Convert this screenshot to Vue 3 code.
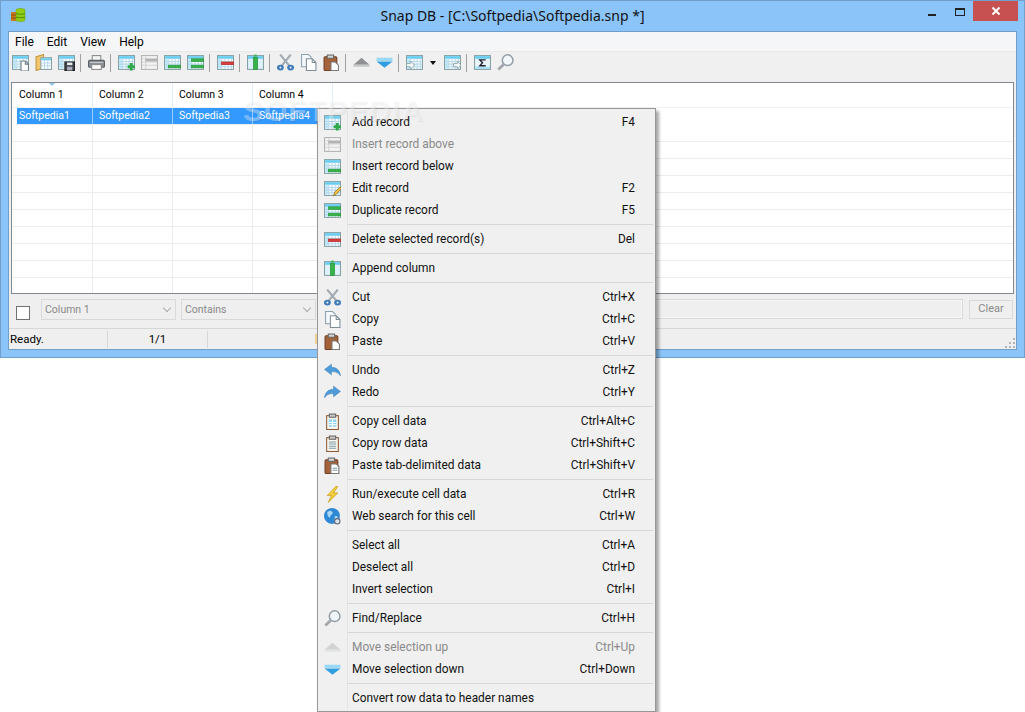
<script setup>
const tbl = (body = '') => `<rect x=".5" y="1.5" width="15" height="13" fill="#fff" stroke="#86a0a4"/><rect x="1" y="2" width="14" height="2.500" fill="#69cdf2"/><rect x="1" y="4.500" width="3" height="9.500" fill="#c2ebfb"/><path d="M1 7h14M1 9.500h14M1 12h14M4.500 4.500v9.500M7.500 4.500v9.500M10.500 4.500v9.500M13.500 4.500v9.500" stroke="#b5d8ec" fill="none"/>${body}`
const page = `<path d="M8.500 6.500h4l3 3v6.500h-7z" fill="#fff" stroke="#6f7f88"/><path d="M12.500 6.500v3h3" fill="none" stroke="#6f7f88"/>`
const bar = (y, c = '#37b34a', e = '#1f8f33') => `<rect x="4" y="${y}" width="12" height="2.600" fill="${c}" stroke="${e}" stroke-width=".5"/>`
const tri = (up, a, b) => up
  ? `<path d="M8 3.500L15.500 10H.5z" fill="${a}"/><rect x=".5" y="10" width="15" height="2" fill="${b}"/>`
  : `<path d="M.5 7h15L8 13z" fill="${a}"/><rect x=".5" y="3.500" width="15" height="3" fill="${b}"/>`
const scissors = `<path d="M3 .5l8.500 10.500M13 .5L4.500 11" stroke="#a2abb2" stroke-width="2" fill="none"/><ellipse cx="3.200" cy="12.800" rx="3.200" ry="2.700" fill="#3f79b8"/><ellipse cx="12.800" cy="12.800" rx="3.200" ry="2.700" fill="#3f79b8"/><circle cx="3.200" cy="12.800" r="1" fill="#dfeaf4"/><circle cx="12.800" cy="12.800" r="1" fill="#dfeaf4"/>`
const clip = `<rect x="1" y="2.500" width="12" height="13" rx="1" fill="#a4623a" stroke="#6f3f22"/><rect x="4" y="1" width="6" height="3" fill="#d8d8d8" stroke="#666"/>`
const icons = {
  new: tbl(page),
  open: `<path d="M1 2.500l7-2v13l-7 2z" fill="#f2c66d" stroke="#c2953f"/><rect x="5.500" y="3.500" width="10" height="11" fill="#fff" stroke="#86a0a4"/><rect x="6" y="4" width="9" height="2" fill="#69cdf2"/><path d="M6 8.500h9M6 11h9M9 6v8M12 6v8" stroke="#b5d8ec"/>`,
  save: tbl(`<rect x="6.500" y="7.500" width="9" height="8" fill="#3b4650" stroke="#222"/><rect x="8.500" y="8" width="5" height="2.500" fill="#e8e8e8"/><rect x="8.500" y="12" width="5" height="3.500" fill="#aab"/>`),
  print: `<rect x="4" y="1.500" width="8" height="5" fill="#f4f4f4" stroke="#8a8a8a"/><rect x=".5" y="6" width="15" height="6.500" rx="1" fill="#8a9096" stroke="#5b6166"/><rect x="3.500" y="10" width="9" height="4.500" fill="#fff" stroke="#8a8a8a"/><rect x="2" y="7.500" width="12" height="1" fill="#c4c8cc"/>`,
  add: tbl(`<path d="M12.500 8.500v7M9 12h7" stroke="#2fa84a" stroke-width="2.600"/>`),
  above: `<g opacity=".8"><rect x=".5" y="1.500" width="15" height="13" fill="#f4f4f4" stroke="#a4a4a4"/><path d="M1 4.500h14M1 7.500h14M1 10.500h14M4.500 2v12" stroke="#ccc"/><rect x="4" y="4.500" width="12" height="2.500" fill="#a4a4a4"/></g>`,
  below: tbl(bar(10.500)),
  dup: tbl(bar(4.500) + bar(10.500)),
  edit: tbl(`<path d="M9 15l1-3.500 5-5 1.500 1.500-5 5.500z" fill="#f3c33e" stroke="#8a6a20" stroke-width=".7"/>`),
  del: tbl(bar(7.500, '#dc3d3d', '#a22')),
  col: `<rect x=".5" y="1.500" width="15" height="13" fill="#dff2fb" stroke="#86a0a4"/><rect x="1" y="2" width="14" height="2.500" fill="#69cdf2"/><rect x="6" y="3" width="4" height="11.500" fill="#38b349" stroke="#1f8f33" stroke-width=".6"/><rect x="7" y=".5" width="2" height="2" fill="#38b349"/>`,
  cut: scissors,
  copy: `<path d="M1.500 .5h6.500l2.500 2.500v9h-9z" fill="#f7fafc" stroke="#8ba0ad"/><path d="M6 4.500h5.500l3.500 3.500v7.500h-9z" fill="#fff" stroke="#7d8e99"/><path d="M11.500 4.500v3.500h3.500" fill="none" stroke="#7d8e99"/>`,
  paste: clip + `<path d="M7.500 7.500h4l3 3v5h-7z" fill="#fff" stroke="#777"/>`,
  up: tri(true, '#8e9094', '#c5c6c8'),
  down: tri(false, '#2f9fe2', '#9ad8f5'),
  upOff: tri(true, '#d0d2d4', '#e2e3e4'),
  imp: tbl(`<path d="M.5 9h3.500v-2.500l4 4-4 4v-2.500h-3.500z" fill="#f4f8fa" stroke="#86a0a4" stroke-width=".8"/>`),
  exp: tbl(`<path d="M9 9h3.500v-2.500l3.500 4-3.500 4v-2.500h-3.500z" fill="#f4f8fa" stroke="#86a0a4" stroke-width=".8"/>`),
  sigma: `<rect x=".5" y="1.500" width="15" height="13" fill="#eaf6fb" stroke="#86a0a4"/><rect x="1" y="2" width="14" height="2.500" fill="#69cdf2"/><rect x="1" y="12" width="14" height="2" fill="#a5e0f6"/><path d="M11 5.500H5.500L8 8.200l-2.500 2.800H11" fill="none" stroke="#223" stroke-width="1.300"/>`,
  find: `<circle cx="10" cy="5.800" r="5" fill="#f0f6fa" stroke="#929ea6" stroke-width="1.400"/><path d="M6.200 9.800L1.200 14.500" stroke="#a0a6ab" stroke-width="2.600"/>`,
  undo: `<path d="M.5 7L7 2v3c5 0 8 3 8.500 8-2-3-4-4-8.500-4v3z" fill="#4f9bd9" stroke="#3b7fb8" stroke-width=".5"/>`,
  redo: `<path d="M15.500 7L9 2v3C4 5 1 8 .5 13c2-3 4-4 8.500-4v3z" fill="#4f9bd9" stroke="#3b7fb8" stroke-width=".5"/>`,
  cell: `<rect x="2.500" y="2.500" width="11" height="13" fill="#fdf9ee" stroke="#8a5a36"/><rect x="5" y="1" width="6" height="3" fill="#c9c9c9" stroke="#666"/><rect x="4.500" y="6" width="7" height="7" fill="#8fd3f2"/><path d="M4.500 9h7M4.500 11h7M8 6v7" stroke="#fff"/>`,
  row: `<rect x="2.500" y="2.500" width="11" height="13" fill="#fdf9ee" stroke="#8a5a36"/><rect x="5" y="1" width="6" height="3" fill="#c9c9c9" stroke="#666"/><path d="M4.500 6.500h7M4.500 8.500h7M4.500 10.500h7M4.500 12.500h7" stroke="#7a9aa8"/>`,
  pasteTab: clip + `<path d="M6.500 6.500h5l2.500 2.500v6.500h-7.500z" fill="#fff" stroke="#777"/><path d="M8 10.500h4.500M8 12.500h4.500" stroke="#7a9aa8"/>`,
  run: `<path d="M11 .5L3 9h4l-3 6.500 9-9H9l4-6z" fill="#f3cf3c" stroke="#c99a1e" stroke-width=".7"/>`,
  web: `<circle cx="7.500" cy="7.500" r="7.500" fill="#2f88d4"/><path d="M3 4c2-2 4-2 5 0s-2 2-2 4-3 1-3-4zM10 8c2-1 3 0 3 1s-2 3-3 2z" fill="#a8d6f4"/><circle cx="12.500" cy="12.500" r="2.500" fill="#dde6ec" stroke="#667"/>`,
  none: '',
}
const S = { sep: true }
const m = (label, key = '', icon = 'none', off = false) => ({ label, key, icon, off })
const menu = [
  m('Add record', 'F4', 'add'), m('Insert record above', '', 'above', true), m('Insert record below', '', 'below'),
  m('Edit record', 'F2', 'edit'), m('Duplicate record', 'F5', 'dup'), S,
  m('Delete selected record(s)', 'Del', 'del'), S,
  m('Append column', '', 'col'), S,
  m('Cut', 'Ctrl+X', 'cut'), m('Copy', 'Ctrl+C', 'copy'), m('Paste', 'Ctrl+V', 'paste'), S,
  m('Undo', 'Ctrl+Z', 'undo'), m('Redo', 'Ctrl+Y', 'redo'), S,
  m('Copy cell data', 'Ctrl+Alt+C', 'cell'), m('Copy row data', 'Ctrl+Shift+C', 'row'), m('Paste tab-delimited data', 'Ctrl+Shift+V', 'pasteTab'), S,
  m('Run/execute cell data', 'Ctrl+R', 'run'), m('Web search for this cell', 'Ctrl+W', 'web'), S,
  m('Select all', 'Ctrl+A'), m('Deselect all', 'Ctrl+D'), m('Invert selection', 'Ctrl+I'), S,
  m('Find/Replace', 'Ctrl+H', 'find'), S,
  m('Move selection up', 'Ctrl+Up', 'upOff', true), m('Move selection down', 'Ctrl+Down', 'down'), S,
  m('Convert row data to header names'),
]
const tools = ['new', 'open', 'save', '|', 'print', '|', 'add', 'above', 'below', 'dup', '|', 'del', '|', 'col', '|', 'cut', 'copy', 'paste', '|', 'up', 'down', '|', 'imp', 'v', 'exp', '|', 'sigma', 'find']
const columns = ['Column 1', 'Column 2', 'Column 3', 'Column 4']
const selected = ['Softpedia1', 'Softpedia2', 'Softpedia3', 'Softpedia4']
const emptyRows = 10
</script>

<template>
  <div class="screen">
    <div class="window">
      <div class="titlebar">
        <svg class="appicon" width="16" height="16" viewBox="0 0 16 16">
          <path d="M1 5h6v9H1z" fill="#c9791e" />
          <path d="M1 8h6M1 11h6" stroke="#8a4d10" />
          <path d="M6 3c0-2 9-2 9 0v10c0 2-9 2-9 0z" fill="#8fce12" stroke="#6aa10b" stroke-width=".5" />
          <path d="M6 6.500c2 1 7 1 9 0M6 10c2 1 7 1 9 0" stroke="#4f8a08" fill="none" />
        </svg>
        <div class="title">Snap DB - [C:\Softpedia\Softpedia.snp *]</div>
        <div class="controls">
          <span class="ctl min"><i></i></span>
          <span class="ctl max"><i></i></span>
          <span class="ctl close">
            <svg width="10" height="10" viewBox="0 0 10 10"><path d="M1.500 1.500l7 7M8.500 1.500l-7 7" stroke="#fff" stroke-width="2" /></svg>
          </span>
        </div>
      </div>
      <div class="client">
        <div class="menubar">
          <span>File</span><span>Edit</span><span>View</span><span>Help</span>
        </div>
        <div class="toolbar">
          <template v-for="(t, i) in tools" :key="i">
            <span v-if="t === '|'" class="tsep"></span>
            <span v-else-if="t === 'v'" class="tdrop"></span>
            <span v-else class="tbtn"><svg width="17" height="17" viewBox="0 0 16 16" v-html="icons[t]"></svg></span>
          </template>
        </div>
        <div class="gridwrap">
          <div class="grid">
            <div class="hdr">
              <div v-for="(c, i) in columns" :key="c" class="hcell">
                <span v-if="i === 0" class="sort"></span>{{ c }}
              </div>
            </div>
            <div class="row sel">
              <div v-for="c in selected" :key="c" class="cell">{{ c }}</div>
            </div>
            <div v-for="r in emptyRows" :key="r" class="row">
              <div v-for="c in 4" :key="c" class="cell"></div>
            </div>
          </div>
        </div>
        <div class="filter">
          <span class="check"></span>
          <span class="combo">Column 1<b></b></span>
          <span class="combo">Contains<b></b></span>
          <span class="input"></span>
          <span class="clear">Clear</span>
        </div>
        <div class="status">
          <span class="p1">Ready.</span>
          <span class="p2">1/1</span>
          <span class="p3"></span>
          <span class="p4"></span>
          <svg class="grip" width="11" height="11" viewBox="0 0 11 11" fill="#b4b4b4">
            <rect x="8" y="0" width="2" height="2" /><rect x="4" y="4" width="2" height="2" /><rect x="8" y="4" width="2" height="2" />
            <rect x="0" y="8" width="2" height="2" /><rect x="4" y="8" width="2" height="2" /><rect x="8" y="8" width="2" height="2" />
          </svg>
        </div>
      </div>
    </div>
    <div class="ctx">
      <template v-for="(it, i) in menu" :key="i">
        <div v-if="it.sep" class="msep"></div>
        <div v-else class="mitem" :class="{ off: it.off }">
          <span class="micon"><svg v-if="it.icon !== 'none'" width="17" height="17" viewBox="0 0 16 16" v-html="icons[it.icon]"></svg></span>
          <span class="mlabel">{{ it.label }}</span>
          <span class="mkey">{{ it.key }}</span>
        </div>
      </template>
    </div>
    <div class="mark">SOFTPEDIA</div>
  </div>
</template>

<style>
html, body { background: #fff; }
</style>

<style scoped>
.screen {
  position: relative;
  width: 1025px;
  height: 712px;
  overflow: hidden;
  background: #fff;
  font-family: Roboto, "Noto Sans", sans-serif;
  font-size: 12px;
  color: #000;
}
.window {
  width: 1025px;
  height: 358px;
  box-sizing: border-box;
  background: #8bc4f8;
  border: 1px solid #6f9fca;
  display: flex;
  flex-direction: column;
  padding: 0 7px 7px;
}
.titlebar {
  height: 30px;
  flex: none;
  position: relative;
  display: flex;
  justify-content: center;
  align-items: center;
}
.appicon { position: absolute; left: 2px; top: 6px; }
.title { font-family: "Noto Sans", sans-serif; font-size: 14px; color: #111; margin-top: -1px; }
.controls { position: absolute; right: -7px; top: 0; display: flex; }
.ctl { display: flex; align-items: center; justify-content: center; }
.min { width: 26px; height: 21px; }
.min i { width: 8px; height: 2px; background: #222; margin-top: 7px; display: block; }
.max { width: 26px; height: 21px; margin-left: 2px; }
.max i { width: 8px; height: 5px; border: 1px solid #222; border-top-width: 2px; display: block; margin-top: 1px; }
.close { width: 45px; height: 20px; background: #c75050; margin-right: 6px; }
.client {
  flex: 1;
  min-height: 0;
  display: flex;
  flex-direction: column;
  background: #efefef;
  border: 1px solid #6f9fca;
}
.menubar {
  height: 19px;
  flex: none;
  background: #f5f6f7;
  display: flex;
  align-items: center;
  padding-left: 6px;
  gap: 13px;
  font-size: 12px;
}
.toolbar {
  height: 28px;
  flex: none;
  display: flex;
  align-items: flex-start;
  background: #f0f0f0;
  border-top: 1px solid #e9e9e9;
  box-sizing: border-box;
  padding-top: 2px;
}
.tbtn { width: 23px; height: 17px; display: flex; align-items: center; justify-content: center; flex: none; }
.tbtn svg { display: block; }
.tsep { width: 7px; height: 18px; flex: none; position: relative; }
.tsep::after { content: ""; position: absolute; left: 2px; top: 0; width: 1px; height: 100%; background: #a0a0a0; }
.tdrop { width: 15px; height: 19px; flex: none; position: relative; }
.tdrop::after { content: ""; position: absolute; left: 4px; top: 7px; border: 3.500px solid transparent; border-top: 4px solid #111; border-bottom: 0; }
.gridwrap { padding: 3px 2px 0; flex: none; }
.grid {
  height: 212px;
  box-sizing: border-box;
  border: 1px solid #828790;
  background: #fff;
  overflow: hidden;
  font-size: 10.500px;
}
.hdr { height: 25px; display: flex; background: #fff; border-bottom: 1px solid #eef2f7; box-sizing: border-box; }
.hcell {
  width: 80px;
  box-sizing: border-box;
  border-right: 1px solid #e3eef9;
  display: flex;
  align-items: center;
  padding: 0 0 2px 6px;
  position: relative;
}
.hcell:first-child { width: 81px; padding-left: 7px; }
.sort { position: absolute; left: 37px; top: 0; border: 3.500px solid transparent; border-top: 3.500px solid #8cc6e8; border-bottom: 0; }
.row { height: 17px; display: flex; border-bottom: 1px solid #ececec; box-sizing: border-box; }
.cell { width: 80px; box-sizing: border-box; border-right: 1px solid #ececec; padding-left: 6px; line-height: 15px; white-space: nowrap; }
.row .cell:first-child { width: 81px; }
.row.sel { margin-left: 5px; width: fit-content; background: #3399ff; color: #fff; }
.row.sel .cell { border-right: 1px solid #9ccbf7; }
.row.sel .cell:first-child { width: 76px; padding-left: 2px; }
.filter {
  height: 34px;
  flex: none;
  display: flex;
  align-items: flex-start;
  box-sizing: border-box;
  padding: 5px 0 0 7px;
  color: #8a8a8a;
  font-size: 10.500px;
}
.check { width: 12px; height: 12px; border: 1px solid #707070; background: #fff; margin: 7px 11px 0 0; flex: none; }
.combo {
  box-sizing: border-box;
  width: 135px;
  height: 21px;
  border: 1px solid #d9d9d9;
  padding-left: 3px;
  line-height: 19px;
  margin-right: 5px;
  position: relative;
  flex: none;
}
.combo b { position: absolute; right: 5px; top: 5px; width: 5px; height: 5px; border-right: 1.500px solid #aaa; border-bottom: 1.500px solid #aaa; transform: rotate(45deg); }
.input { flex: 1; height: 18px; border: 1px solid #d9d9d9; outline: 1px solid #f7f7f7; outline-offset: -2px; }
.clear {
  width: 42px;
  height: 17px;
  margin: 1px 3px 0 6px;
  border: 1px solid #d9d9d9;
  text-align: center;
  line-height: 16px;
  flex: none;
  font-size: 11px;
}
.status {
  flex: 1;
  min-height: 0;
  border-top: 1px solid #d7d7d7;
  display: flex;
  align-items: center;
  position: relative;
  font-size: 11.500px;
}
.status span { display: flex; align-items: center; height: 17px; box-sizing: border-box; }
.p1 { width: 99px; padding-left: 1px; border-right: 1px solid #d7d7d7; }
.p2 { width: 100px; justify-content: center; border-right: 1px solid #d7d7d7; }
.p3 { width: 107px; }
.p4 { width: 4px; height: 10px !important; background: #f0d090; }
.grip { position: absolute; right: 0; bottom: 0; }
.ctx {
  position: absolute;
  left: 317px;
  top: 108px;
  width: 339px;
  height: 604px;
  box-sizing: border-box;
  background: #f0f0f0;
  border: 1px solid #979797;
  padding: 2px 0 2px 2px;
  box-shadow: 3px 3px 3px rgba(0, 0, 0, .35);
  background-image: linear-gradient(#e3e3e3, #e3e3e3);
  background-size: 1px calc(100% - 4px);
  background-position: 29px 2px;
  background-repeat: no-repeat;
  font-size: 11.900px;
  z-index: 2;
}
.mitem { height: 22px; display: flex; align-items: center; color: #111; }
.mitem.off { color: #8a8a8a; }
.micon { width: 26px; display: flex; justify-content: center; flex: none; margin-left: -1px; margin-right: 7px; }
.micon svg { display: block; }
.mlabel { flex: 1; white-space: nowrap; }
.mkey { margin-right: 20px; white-space: nowrap; }
.msep { height: 1px; margin: 3px 2px 3px 28px; background: #d7d7d7; }
.mark {
  position: absolute;
  left: 243px;
  top: 94px;
  font: 700 30px "Liberation Sans", sans-serif;
  letter-spacing: 1px;
  color: rgba(255, 255, 255, .35);
  text-shadow: 1px 1px 1px rgba(0, 0, 0, .06);
  z-index: 3;
  pointer-events: none;
}
</style>
